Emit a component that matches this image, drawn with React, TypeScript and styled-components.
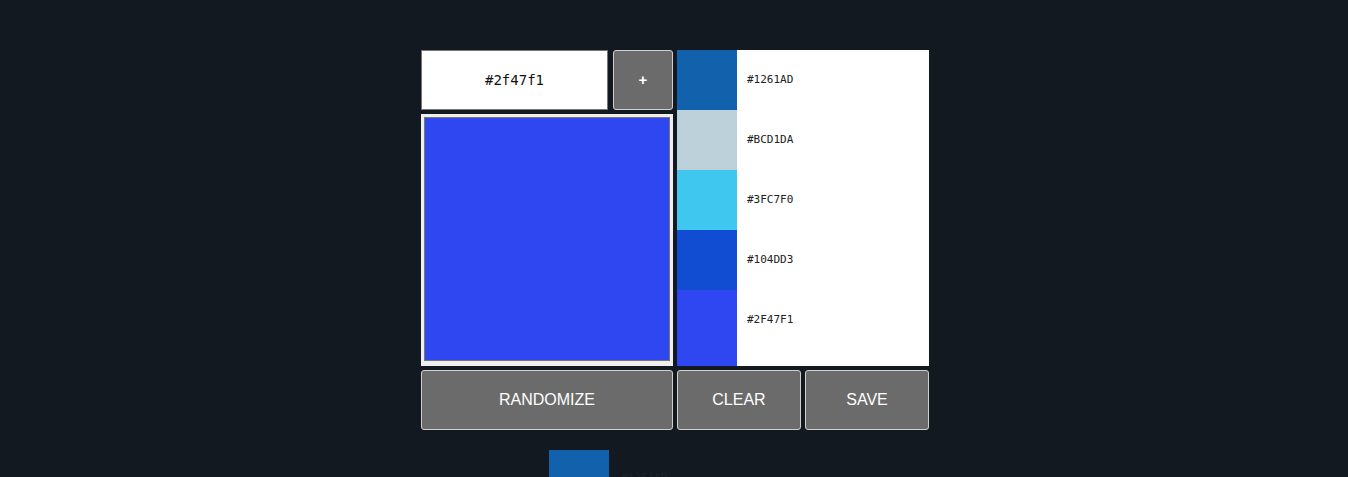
import React from "react";
import styled, { createGlobalStyle } from "styled-components";

const Global = createGlobalStyle`
  html, body { margin: 0; padding: 0; background: #121920; height: 100%; overflow: hidden; }
  #root { min-height: 100%; }
`;

const Page = styled.div`
  display: flex;
  justify-content: center;
  padding: 50px 0 0 2px;
`;

const Board = styled.div`
  width: 508px;
  display: grid;
  grid-template-columns: 252px 124px 124px;
  grid-template-rows: 60px 252px 60px;
  column-gap: 4px;
  row-gap: 4px;
`;

const TopRow = styled.div`
  display: flex;
  gap: 5px;
`;

const HexInput = styled.input`
  width: 187px;
  height: 60px;
  box-sizing: border-box;
  border: 1px solid #767676;
  background: #fff;
  text-align: center;
  font-family: "DejaVu Sans Mono", "Liberation Mono", monospace;
  font-size: 14px;
  color: #111;
  outline: none;
  padding: 0;
`;

const Button = styled.button`
  box-sizing: border-box;
  height: 60px;
  background: #6b6b6b;
  border: 1px solid #cfcfcf;
  border-radius: 3px;
  color: #fff;
  font-family: "Liberation Sans", Arial, sans-serif;
  font-size: 16px;
  padding: 0;
  cursor: pointer;
`;

const AddButton = styled(Button)`
  width: 60px;
  font-size: 15px;
  font-weight: bold;
  padding-bottom: 2px;
`;

const Preview = styled.div<{ $color: string }>`
  box-sizing: border-box;
  background: #efefef;
  padding: 3px 3px 5px 3px;
  display: flex;
  & > div {
    flex: 1;
    border: 1px solid #777;
    background: ${(p) => p.$color};
  }
`;

const PaletteList = styled.div`
  grid-column: 2 / 4;
  grid-row: 1 / 3;
  background: #fff;
  display: flex;
  flex-direction: column;
`;

const Item = styled.div<{ $grow?: boolean }>`
  display: flex;
  height: 60px;
  flex: ${(p) => (p.$grow ? "1 0 60px" : "0 0 60px")};
  align-items: stretch;
`;

const Swatch = styled.div<{ $color: string }>`
  width: 60px;
  flex: 0 0 60px;
  background: ${(p) => p.$color};
`;

const Label = styled.span<{ $tall?: boolean }>`
  display: flex;
  align-items: ${(p) => (p.$tall ? "flex-start" : "center")};
  padding-top: ${(p) => (p.$tall ? "23px" : "0")};
  padding-bottom: ${(p) => (p.$tall ? "0" : "2px")};
  padding-left: 10px;
  font-family: "DejaVu Sans Mono", "Liberation Mono", monospace;
  font-size: 11px;
  color: #222;
`;

const Saved = styled.div`
  display: flex;
  margin: 20px 0 0 128px;
  height: 60px;
`;

const SavedLabel = styled.span`
  display: flex;
  align-items: center;
  padding-left: 12px;
  padding-bottom: 6px;
  font-family: "DejaVu Sans Mono", "Liberation Mono", monospace;
  font-size: 11px;
  color: #1c232b;
`;

const colors = ["#1261AD", "#BCD1DA", "#3FC7F0", "#104DD3", "#2F47F1"];

export default function App() {
  return (
    <>
      <Global />
      <Page>
        <div>
          <Board>
            <TopRow>
              <HexInput defaultValue="#2f47f1" />
              <AddButton>+</AddButton>
            </TopRow>
            <PaletteList>
              {colors.map((c, i) => {
                const last = i === colors.length - 1;
                return (
                  <Item key={c} $grow={last}>
                    <Swatch $color={c} />
                    <Label $tall={last}>{c}</Label>
                  </Item>
                );
              })}
            </PaletteList>
            <Preview $color="#2f47f1">
              <div />
            </Preview>
            <Button>RANDOMIZE</Button>
            <Button>CLEAR</Button>
            <Button>SAVE</Button>
          </Board>
          <Saved>
            <Swatch $color="#1261AD" />
            <SavedLabel>#1261AD</SavedLabel>
          </Saved>
        </div>
      </Page>
    </>
  );
}
